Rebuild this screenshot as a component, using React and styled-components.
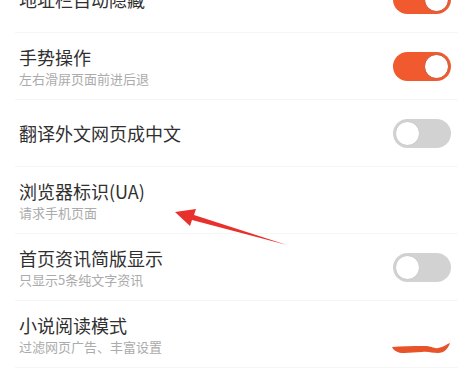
import React from "react";
import styled, { createGlobalStyle } from "styled-components";

const GlobalStyle = createGlobalStyle`
  html, body {
    margin: 0;
    padding: 0;
    background: #fff;
    overflow: hidden;
  }
  body {
    font-family: "Noto Sans CJK SC", "Noto Sans", sans-serif;
  }
`;

const Page = styled.div`
  position: relative;
  width: 472px;
  height: 370px;
  overflow: hidden;
  background: #fff;
`;

const List = styled.div`
  display: flex;
  flex-direction: column;
  margin-top: -34px;
`;

const Row = styled.div`
  display: flex;
  align-items: center;
  justify-content: space-between;
  height: 67px;
  margin: 0 14px 0 15px;
  padding: 0 5px 0 4px;
  border-bottom: 1px solid #f6f6f6;
  box-sizing: border-box;
`;

const Texts = styled.div`
  display: flex;
  flex-direction: column;
`;

const Title = styled.div`
  font-size: 18px;
  line-height: 23px;
  color: #303030;
`;

const Sub = styled.div`
  font-size: 13px;
  line-height: 17px;
  color: #ababab;
  margin-top: 1px;
`;

const Track = styled.div`
  position: relative;
  width: 58px;
  height: 29px;
  border-radius: 15px;
  background: ${(p) => (p.$on ? "#f15a2e" : "#d2d2d2")};
  margin-right: 2px;
  flex: none;
`;

const Knob = styled.div`
  position: absolute;
  top: 2px;
  ${(p) => (p.$on ? "right: 2px;" : "left: 2px;")}
  width: 23px;
  height: 23px;
  border-radius: 50%;
  background: #fff;
  border: 1px solid ${(p) => (p.$on ? "#c9502e" : "#c8c8c8")};
`;

const Squashed = styled.svg`
  width: 60px;
  height: 14px;
  margin-right: 1px;
  margin-top: 32px;
  flex: none;
`;

const Arrow = styled.svg`
  position: absolute;
  left: 0;
  top: 0;
  pointer-events: none;
`;

function Toggle({ on }) {
  return (
    <Track $on={on}>
      <Knob $on={on} />
    </Track>
  );
}

const rows = [
  { title: "地址栏自动隐藏", on: true },
  { title: "手势操作", sub: "左右滑屏页面前进后退", on: true },
  { title: "翻译外文网页成中文", on: false },
  { title: "浏览器标识(UA)", sub: "请求手机页面" },
  { title: "首页资讯简版显示", sub: "只显示5条纯文字资讯", on: false },
  { title: "小说阅读模式", sub: "过滤网页广告、丰富设置", squashed: true },
];

export default function App() {
  return (
    <>
      <GlobalStyle />
      <Page>
        <List>
          {rows.map((r) => (
            <Row key={r.title}>
              <Texts>
                <Title>{r.title}</Title>
                {r.sub && <Sub>{r.sub}</Sub>}
              </Texts>
              {r.squashed ? (
                <Squashed viewBox="0 0 60 14">
                  <path
                    d="M0 4 C10 3 20 3 32 3 C40 3 42 6 46 5 C52 4 55 1 58 0 C56 6 52 10 46 10 C40 10 36 8 30 9 L12 10 C6 10 2 8 0 4 Z"
                    fill="#e8532a"
                  />
                </Squashed>
              ) : (
                r.on !== undefined && <Toggle on={r.on} />
              )}
            </Row>
          ))}
        </List>
        <Arrow width="472" height="370" viewBox="0 0 472 370">
          <path d="M287 245 L192 220 L190 226 L175 212 L196 209 L194 215 Z" fill="#e8302c" />
        </Arrow>
      </Page>
    </>
  );
}
